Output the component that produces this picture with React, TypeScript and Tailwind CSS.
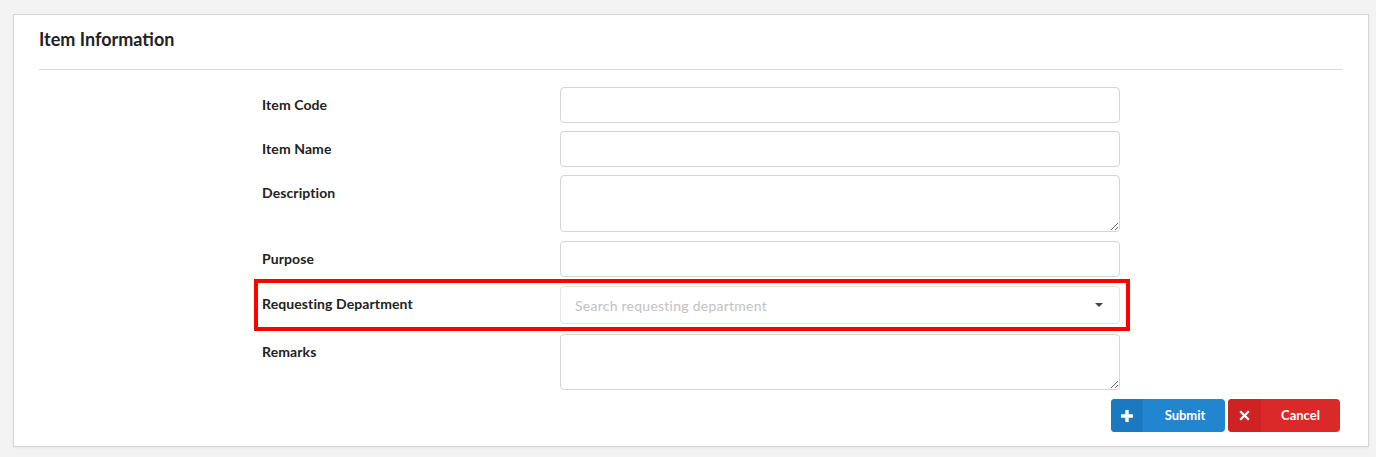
import React from "react";

const font = { fontFamily: "Lato, 'Open Sans', 'Liberation Sans', sans-serif" };

function Row({
  label,
  children,
  className = "",
}: {
  label: string;
  children: React.ReactNode;
  className?: string;
}) {
  return (
    <div className={`relative flex ml-[223px] w-[858px] ${className}`}>
      <div className="w-[298px] pt-[8px] text-[14px] leading-[20px] font-bold tracking-[0.1px] text-[#222]">{label}</div>
      <div className="w-[560px]">{children}</div>
    </div>
  );
}

function PlusIcon() {
  return (
    <svg width="12" height="12" viewBox="0 0 12 12">
      <path d="M4.3 0h3.4v4.3H12v3.4H7.7V12H4.3V7.7H0V4.3h4.3z" fill="#fff" />
    </svg>
  );
}

function CloseIcon() {
  return (
    <svg width="11" height="11" viewBox="0 0 11 11">
      <path d="M2 0.4 L5.5 3.9 L9 0.4 L10.6 2 L7.1 5.5 L10.6 9 L9 10.6 L5.5 7.1 L2 10.6 L0.4 9 L3.9 5.5 L0.4 2 Z" fill="#fff" />
    </svg>
  );
}

export default function App() {
  const inputCls =
    "block w-full rounded-[4px] border border-[#d4d5d6] bg-white px-[14px] text-[14px] outline-none";

  return (
    <div className="min-h-[457px] w-full bg-[#f3f3f3] pt-[14px] pb-[10px]" style={font}>
      <div className="ml-[13px] w-[1356px] h-[433px] border border-[#d6d6d6] bg-white px-[25px] pt-[13px] shadow-[0_1px_2px_rgba(0,0,0,0.06)]">
        <h2 className="text-[18px] leading-[23px] font-bold text-[#222]">Item Information</h2>
        <div className="mt-[18px] h-px bg-[#dcdcdc]" />

        <div className="mt-[17px] flex flex-col">
          <Row label="Item Code">
            <input className={`${inputCls} h-[36px]`} />
          </Row>
          <Row label="Item Name" className="mt-[8px]">
            <input className={`${inputCls} h-[36px]`} />
          </Row>
          <Row label="Description" className="mt-[8px]">
            <textarea className={`${inputCls} h-[57px] py-[8px] resize-y`} />
          </Row>
          <Row label="Purpose" className="mt-[9px]">
            <input className={`${inputCls} h-[36px]`} />
          </Row>
          <Row label="Requesting Department" className="mt-[9px]">
            <div className="flex h-[38px] items-center justify-between rounded-[4px] border border-[#e3e3e3] bg-white pl-[14px] pr-[16px]">
              <span className="text-[14px] tracking-[0.25px] text-[#c2c2c2]">Search requesting department</span>
              <svg width="8" height="4" viewBox="0 0 8 4">
                <path d="M0 0h8L4 4z" fill="#444" />
              </svg>
            </div>
            <div className="pointer-events-none absolute left-[-8px] top-[-7px] h-[52px] w-[876px] border-4 border-[#ff0000]" />
          </Row>
          <Row label="Remarks" className="mt-[10px]">
            <textarea className={`${inputCls} h-[56px] py-[8px] resize-y`} />
          </Row>

          <div className="mt-[9px] flex justify-end gap-[3px] pr-[3px]">
            <button className="flex h-[33px] w-[114px] items-center overflow-hidden rounded-[4px] bg-[#2185d0] text-[13px] font-bold text-white">
              <span className="flex h-full w-[32px] items-center justify-center bg-[#1b79c2]">
                <PlusIcon />
              </span>
              <span className="flex-1 pl-[2px] text-center">Submit</span>
            </button>
            <button className="flex h-[33px] w-[112px] items-center overflow-hidden rounded-[4px] bg-[#db2828] text-[13px] font-bold text-white">
              <span className="flex h-full w-[33px] items-center justify-center bg-[#cf2323]">
                <CloseIcon />
              </span>
              <span className="flex-1 text-center">Cancel</span>
            </button>
          </div>
        </div>
      </div>
    </div>
  );
}
